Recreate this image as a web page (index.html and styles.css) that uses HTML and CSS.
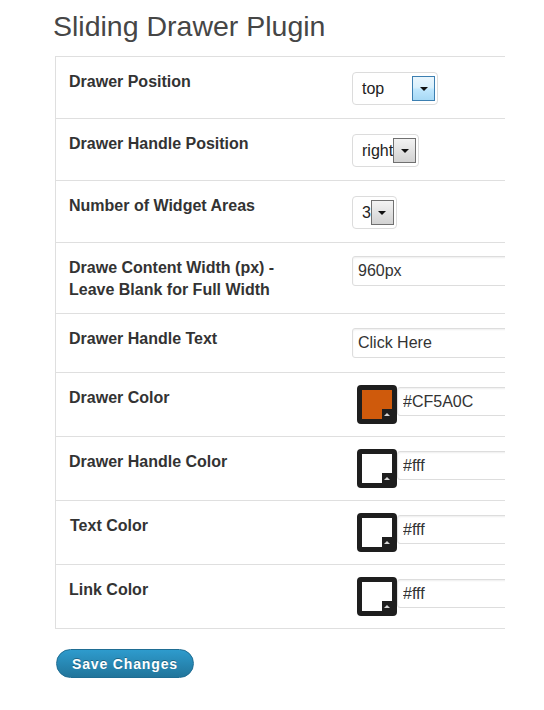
FILE: index.html
```html
<!DOCTYPE html>
<html lang="en">
<head>
<meta charset="utf-8">
<title>Sliding Drawer Plugin</title>
<link rel="stylesheet" href="styles.css">
</head>
<body>
<div class="page">
  <h1 class="title">Sliding Drawer Plugin</h1>
  <form class="settings">
    <div class="table">
      <div class="row">
        <div class="label">Drawer Position</div>
        <div class="control control-select">
          <div class="select select-wide"><span class="select-value">top</span><span class="select-arrow select-arrow-hover"></span></div>
        </div>
      </div>
      <div class="row">
        <div class="label">Drawer Handle Position</div>
        <div class="control control-select">
          <div class="select"><span class="select-value">right</span><span class="select-arrow"></span></div>
        </div>
      </div>
      <div class="row">
        <div class="label">Number of Widget Areas</div>
        <div class="control control-select">
          <div class="select"><span class="select-value">3</span><span class="select-arrow"></span></div>
        </div>
      </div>
      <div class="row">
        <div class="label">Drawe Content Width (px) -<br>Leave Blank for Full Width</div>
        <div class="control control-width">
          <input class="text-input" type="text" value="960px">
        </div>
      </div>
      <div class="row">
        <div class="label">Drawer Handle Text</div>
        <div class="control control-text">
          <input class="text-input" type="text" value="Click Here">
        </div>
      </div>
      <div class="row">
        <div class="label">Drawer Color</div>
        <div class="control control-color">
          <span class="swatch swatch-orange"><span class="swatch-notch"></span></span>
          <input class="color-input" type="text" value="#CF5A0C">
        </div>
      </div>
      <div class="row">
        <div class="label">Drawer Handle Color</div>
        <div class="control control-color">
          <span class="swatch"><span class="swatch-notch"></span></span>
          <input class="color-input" type="text" value="#fff">
        </div>
      </div>
      <div class="row">
        <div class="label label-shift">Text Color</div>
        <div class="control control-color">
          <span class="swatch"><span class="swatch-notch"></span></span>
          <input class="color-input" type="text" value="#fff">
        </div>
      </div>
      <div class="row">
        <div class="label">Link Color</div>
        <div class="control control-color">
          <span class="swatch"><span class="swatch-notch"></span></span>
          <input class="color-input" type="text" value="#fff">
        </div>
      </div>
    </div>
    <button class="save" type="button">Save Changes</button>
  </form>
</div>
</body>
</html>
```

FILE: styles.css
```css
html, body {
  margin: 0;
  padding: 0;
  background: #ffffff;
}

body {
  font-family: "Liberation Sans", Arial, sans-serif;
  color: #333333;
}

.page {
  padding-left: 55px;
}

.title {
  margin: 9px 0 13px -2px;
  font-size: 28.5px;
  line-height: 34px;
  font-weight: normal;
  color: #464646;
}

.settings {
  margin: 0;
}

.table {
  width: 450px;
  box-sizing: border-box;
  overflow: hidden;
  border-top: 1px solid #dfdfdf;
  border-left: 1px solid #dfdfdf;
  border-bottom: 1px solid #dfdfdf;
  background: #ffffff;
}

.row {
  display: grid;
  grid-template-columns: 296px 1fr;
  align-items: start;
  border-bottom: 1px solid #dfdfdf;
}

.row:last-child {
  border-bottom: none;
}

.label {
  padding: 14px 13px 12px;
  font-size: 16px;
  line-height: 22px;
  font-weight: bold;
  color: #333333;
}

.label-shift {
  padding-left: 14px;
}

.control {
  min-width: 0;
}

.control-select {
  padding: 15px 0 13px;
}

.control-width {
  padding-top: 13px;
}

.control-text {
  padding: 14px 0 14px;
}

.control-color {
  display: flex;
  align-items: flex-start;
  padding: 12px 0 12px;
}

/* select look-alike */
.select {
  display: inline-flex;
  align-items: center;
  box-sizing: border-box;
  height: 33px;
  padding: 0 2px 0 9px;
  border: 1px solid #dcdcdc;
  border-radius: 4px;
  background: #ffffff;
  font-size: 16px;
  color: #222222;
  vertical-align: top;
}

.select-wide {
  width: 86px;
}

.select-value {
  line-height: 20px;
}

.select-arrow {
  position: relative;
  box-sizing: border-box;
  width: 23px;
  height: 25px;
  margin-left: auto;
  border: 1px solid #707070;
  background: linear-gradient(#f3f3f3, #d2d2d2);
  flex: none;
}

.select-arrow-hover {
  border-color: #3c7fb1;
  background: linear-gradient(#eaf6fd 0%, #d9f0fc 45%, #bee6fd 55%, #a7d9f5 100%);
}

.select-arrow::after {
  content: "";
  position: absolute;
  left: 50%;
  top: 50%;
  margin-left: -4px;
  margin-top: -2px;
  border-left: 4px solid transparent;
  border-right: 4px solid transparent;
  border-top: 4px solid #111111;
}

/* text inputs */
.text-input {
  display: block;
  box-sizing: border-box;
  width: 240px;
  height: 30px;
  margin: 0;
  padding: 0 5px;
  border: 1px solid #dddddd;
  border-radius: 3px;
  box-shadow: inset 0 1px 2px rgba(0, 0, 0, 0.07);
  background: #ffffff;
  font-family: "Liberation Sans", Arial, sans-serif;
  font-size: 16px;
  color: #333333;
}

.color-input {
  display: block;
  box-sizing: border-box;
  width: 160px;
  height: 29px;
  margin: 2px 0 0;
  padding: 0 5px;
  border: 1px solid #dddddd;
  border-radius: 3px;
  box-shadow: inset 0 1px 2px rgba(0, 0, 0, 0.07);
  background: #ffffff;
  font-family: "Liberation Sans", Arial, sans-serif;
  font-size: 16px;
  color: #333333;
  flex: none;
}

/* colour swatch */
.swatch {
  position: relative;
  display: block;
  box-sizing: border-box;
  width: 40px;
  height: 39px;
  margin-left: 5px;
  border: 5px solid #1e1e1e;
  border-radius: 4px;
  background: #ffffff;
  flex: none;
}

.swatch-orange {
  background: #cf5a0c;
}

.swatch-notch {
  position: absolute;
  right: 0;
  bottom: 0;
  width: 10px;
  height: 10px;
  background: #1e1e1e;
}

.swatch-notch::after {
  content: "";
  position: absolute;
  left: 2px;
  top: 4px;
  border-left: 3px solid transparent;
  border-right: 3px solid transparent;
  border-bottom: 3px solid #d8d8d8;
}

/* save button */
.save {
  display: block;
  box-sizing: border-box;
  height: 29px;
  margin: 20px 0 0 1px;
  padding: 0 15px;
  border: 1px solid #1f6d93;
  border-radius: 15px;
  background: linear-gradient(#2e9bcd, #21759b);
  color: #ffffff;
  font-family: "Liberation Sans", Arial, sans-serif;
  font-size: 14px;
  font-weight: bold;
  letter-spacing: 0.85px;
  text-shadow: 0 -1px 0 rgba(0, 0, 0, 0.3);
  cursor: pointer;
}
```
